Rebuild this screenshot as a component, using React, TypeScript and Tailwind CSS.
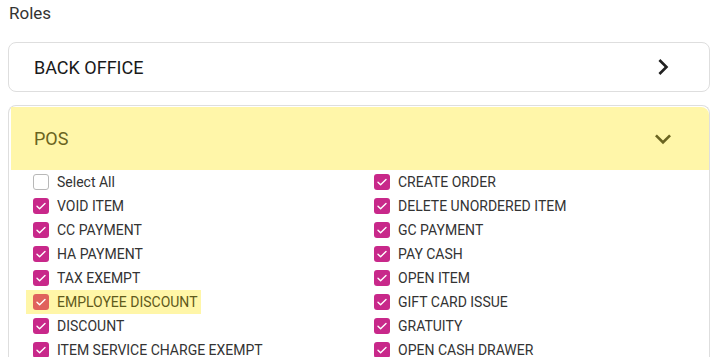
const left = [
  { label: "Select All", checked: false },
  { label: "VOID ITEM", checked: true },
  { label: "CC PAYMENT", checked: true },
  { label: "HA PAYMENT", checked: true },
  { label: "TAX EXEMPT", checked: true },
  { label: "EMPLOYEE DISCOUNT", checked: true, highlight: true },
  { label: "DISCOUNT", checked: true },
  { label: "ITEM SERVICE CHARGE EXEMPT", checked: true },
];

const right = [
  "CREATE ORDER",
  "DELETE UNORDERED ITEM",
  "GC PAYMENT",
  "PAY CASH",
  "OPEN ITEM",
  "GIFT CARD ISSUE",
  "GRATUITY",
  "OPEN CASH DRAWER",
];

function Box({ checked, highlight }: { checked: boolean; highlight?: boolean }) {
  if (!checked) {
    return <span className="h-4 w-4 shrink-0 rounded-[3px] border border-[#b8b8b8] bg-white" />;
  }
  return (
    <span
      className={`flex h-4 w-4 shrink-0 items-center justify-center rounded-[3px] ${
        highlight ? "bg-[#e0625c]" : "bg-[#c8288a]"
      }`}
    >
      <svg width="12" height="12" viewBox="0 0 12 12" fill="none">
        <path d="M2 6.2l2.6 2.6L10 3.4" stroke="white" strokeWidth="1.4" strokeLinecap="round" strokeLinejoin="round" />
      </svg>
    </span>
  );
}

function Row({ label, checked, highlight }: { label: string; checked: boolean; highlight?: boolean }) {
  return (
    <div className="flex h-6 items-center">
      <div
        className={`flex h-6 items-center gap-2 ${highlight ? "-ml-[7px] bg-[#fff6a8] pl-[7px] pr-[3px] text-[#5f5a1c]" : "text-[#333333]"}`}
      >
        <Box checked={checked} highlight={highlight} />
        <span className="text-[14px] leading-none">{label}</span>
      </div>
    </div>
  );
}

export default function App() {
  return (
    <div className="h-[357px] w-[712px] overflow-hidden bg-white pl-2 pr-[2px] font-['Roboto',sans-serif]">
      <div className="pl-px text-[17px] leading-[26px] text-[#333333]">Roles</div>

      <div className="mt-[16px] flex h-[50px] items-center justify-between rounded-lg border border-[#dedede] pl-[25px] pr-[30px]">
        <span className="text-[18px] text-[#1a1a1a]">BACK OFFICE</span>
        <svg width="32" height="32" viewBox="0 0 24 24" fill="#212121">
          <path d="M10 6L8.59 7.41 13.17 12l-4.58 4.59L10 18l6-6z" />
        </svg>
      </div>

      <div className="mt-[13px] rounded-t-lg border-x border-t border-[#dedede] pt-px">
        <div className="ml-[2px] flex h-[63px] items-center justify-between rounded-tr-lg bg-[#fff6a9] pl-[23px] pr-[30px]">
          <span className="text-[18px] text-[#6a6420]">POS</span>
          <svg width="32" height="32" viewBox="0 0 24 24" fill="#6a6420">
            <path d="M16.59 8.59L12 13.17 7.41 8.59 6 10l6 6 6-6z" />
          </svg>
        </div>
        <div className="grid grid-cols-[341px_1fr] pl-6">
          <div className="flex flex-col">
            {left.map((r) => (
              <Row key={r.label} label={r.label} checked={r.checked} highlight={r.highlight} />
            ))}
          </div>
          <div className="flex flex-col">
            {right.map((l) => (
              <Row key={l} label={l} checked />
            ))}
          </div>
        </div>
      </div>
    </div>
  );
}
